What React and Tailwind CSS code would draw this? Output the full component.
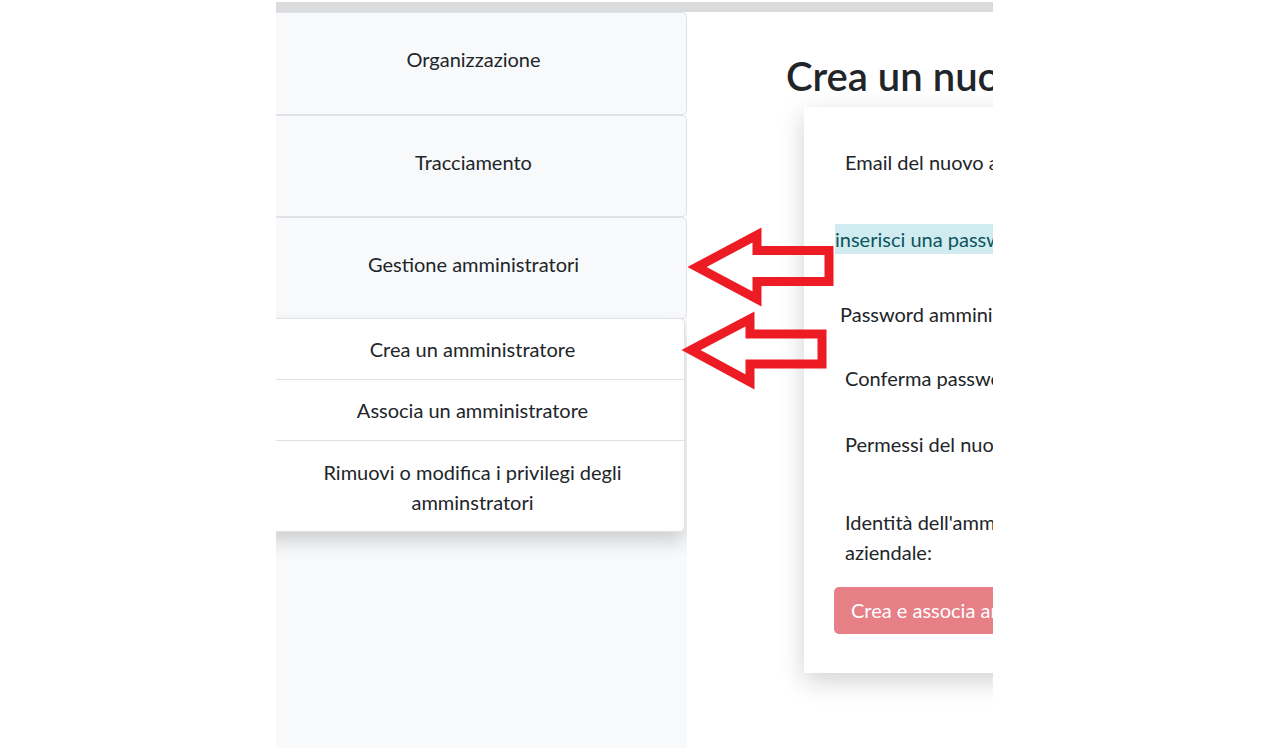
import React from "react";

function SideCard({ children, h }) {
  return (
    <div
      className={
        "w-[427px] border border-[#dfe1e4] rounded-[5px] bg-[#f8f9fa] pt-[31px] text-center text-[20px] leading-[30px] text-[#212529] " +
        h
      }
    >
      {children}
    </div>
  );
}

function SubItem({ children, last }) {
  return (
    <div
      className={
        "px-[20px] text-center text-[20px] leading-[30px] text-[#212529] " +
        (last ? "pt-[16px] pb-[14px]" : "py-[15px] border-b border-[#dfe1e4]")
      }
    >
      {children}
    </div>
  );
}

export default function App() {
  return (
    <div
      className="relative w-[1268px] h-[748px] bg-white overflow-hidden"
      style={{ fontFamily: "Lato, 'Noto Sans', sans-serif" }}
    >
      <div className="ml-[276px] w-[717px] h-full overflow-hidden flex flex-col">
        <div className="h-[2px] bg-white shrink-0" />
        <div className="h-[10px] bg-[#dadbdc] shrink-0" />
        <div className="flex flex-1 min-h-0">
          {/* sidebar */}
          <div className="w-[411px] shrink-0 bg-[#f8f9fa] overflow-hidden">
            <div className="ml-[-16px] w-[427px]">
              <SideCard h="h-[103px]">Organizzazione</SideCard>
              <SideCard h="h-[102px]">Tracciamento</SideCard>
              <SideCard h="h-[102px]">Gestione amministratori</SideCard>
              <div className="-mt-[1px] w-[425px] bg-white border border-[#dfe1e4] rounded-[5px] shadow-[0_10px_18px_rgba(0,0,0,0.16)]">
                <SubItem>Crea un amministratore</SubItem>
                <SubItem>Associa un amministratore</SubItem>
                <SubItem last>
                  Rimuovi o modifica i privilegi degli
                  <br />
                  amminstratori
                </SubItem>
              </div>
            </div>
          </div>
          {/* main */}
          <div className="flex-1 bg-white relative">
            <div className="w-[600px]">
              <h1 className="ml-[99px] mt-[40px] text-[40px] leading-[48px] font-semibold text-[#212529] whitespace-nowrap">
                Crea un nuovo amministratore
              </h1>
              <div className="ml-[117px] mt-[7px] w-[500px] h-[566px] bg-white shadow-[0_8px_24px_rgba(0,0,0,0.18)] text-[20px] leading-[30px] text-[#212529]">
                <div className="pt-[40px] pl-[41px] whitespace-nowrap">
                  Email del nuovo amministratore:
                </div>
                <div className="mt-[47px] ml-[31px] bg-[#d1ecf1] text-[#0c5460] whitespace-nowrap">
                  inserisci una password per l'amministratore
                </div>
                <div className="mt-[45px] pl-[36px] whitespace-nowrap">
                  Password amministratore:
                </div>
                <div className="mt-[34px] pl-[41px] whitespace-nowrap">
                  Conferma password:
                </div>
                <div className="mt-[36px] pl-[41px] whitespace-nowrap">
                  Permessi del nuovo amministratore:
                </div>
                <div className="mt-[48px] pl-[41px] whitespace-nowrap">
                  Identità dell'amministratore
                  <br />
                  aziendale:
                </div>
                <div className="mt-[20px] ml-[30px]">
                  <button className="h-[47px] px-[17px] pb-[2px] rounded-[5px] bg-[#e77f87] text-white text-[20px] leading-[30px] whitespace-nowrap">
                    Crea e associa amministratore
                  </button>
                </div>
              </div>
            </div>
          </div>
        </div>
      </div>

      {/* annotation arrows */}
      <svg
        className="absolute left-0 top-0 pointer-events-none"
        width="1268"
        height="748"
        viewBox="0 0 1268 748"
      >
        <path
          d="M697,267 L757,235 L757,250.5 L829,250.5 L829,281.5 L757,281.5 L757,299 Z"
          fill="none"
          stroke="#ed1c24"
          strokeWidth="9"
          strokeLinejoin="miter"
          strokeMiterlimit="10"
        />
        <path
          d="M691,350 L750,319 L750,334 L822,334 L822,364 L750,364 L750,382 Z"
          fill="none"
          stroke="#ed1c24"
          strokeWidth="9"
          strokeLinejoin="miter"
          strokeMiterlimit="10"
        />
      </svg>
    </div>
  );
}
